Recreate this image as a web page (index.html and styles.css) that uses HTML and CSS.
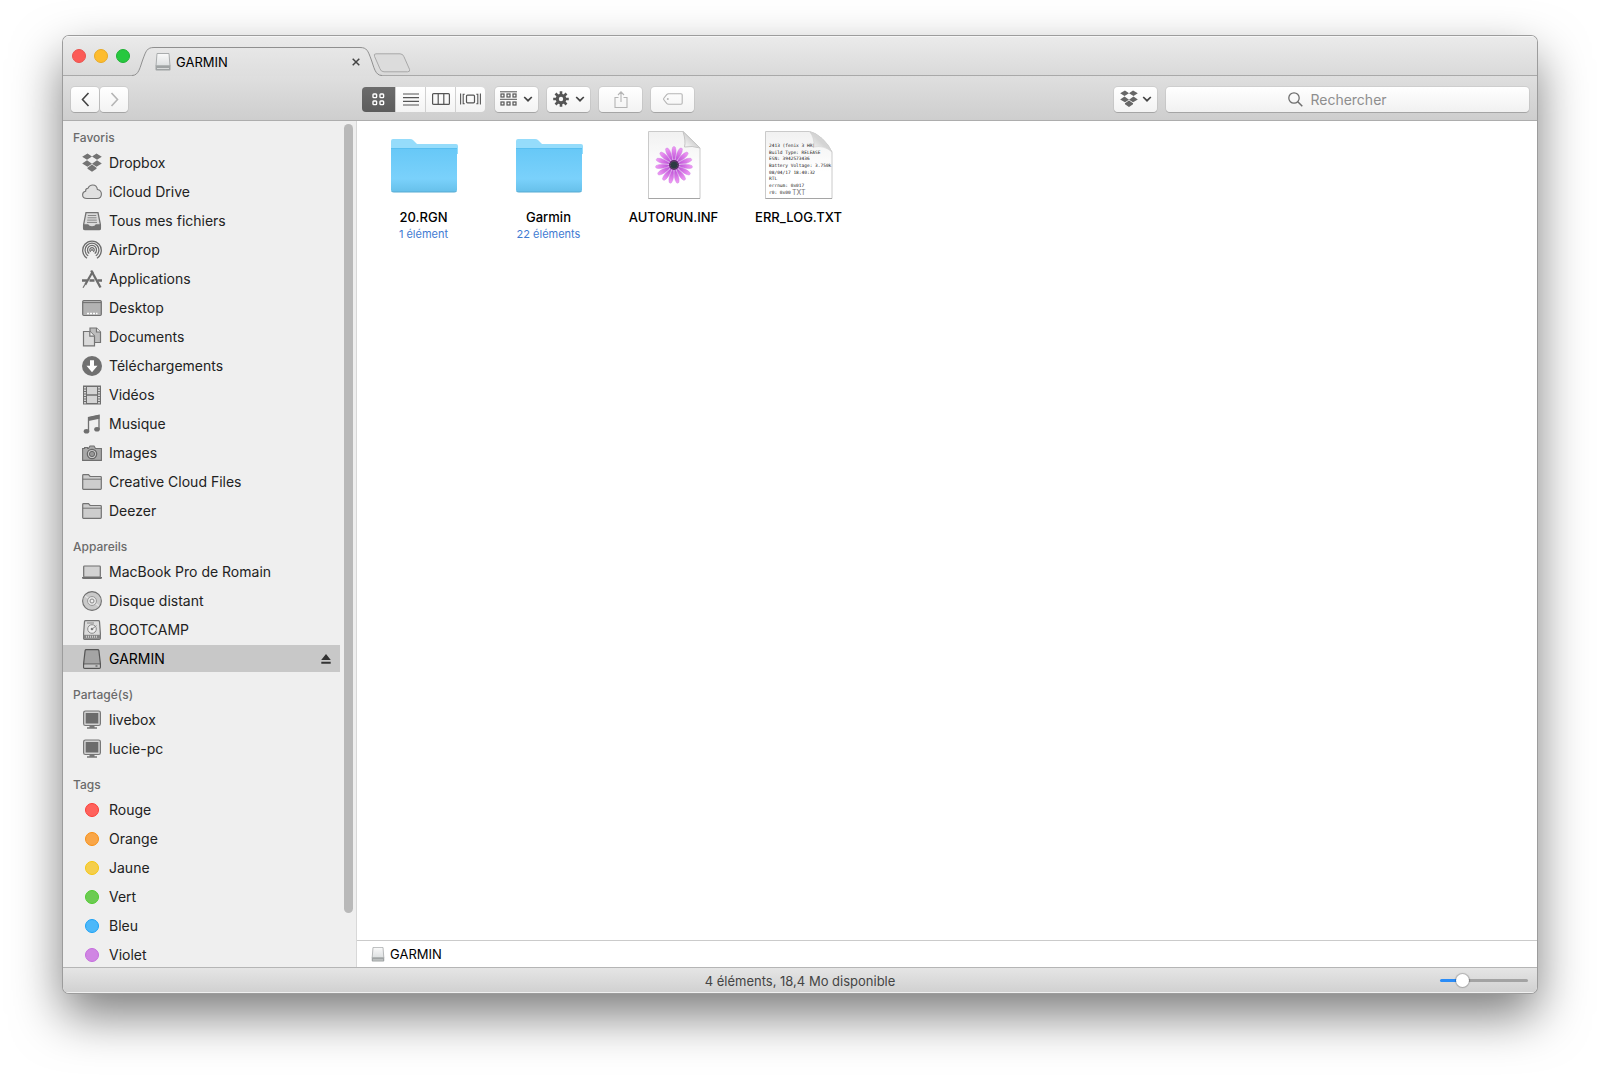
FILE: index.html
```html
<!DOCTYPE html>
<html lang="fr">
<head>
<meta charset="utf-8">
<title>GARMIN</title>
<link rel="stylesheet" href="styles.css">
</head>
<body>
<svg class="defs" aria-hidden="true">
  <defs>
    <linearGradient id="g-disk" x1="0" y1="0" x2="0" y2="1"><stop offset="0" stop-color="#fafafa"/><stop offset="1" stop-color="#dcdfe0"/></linearGradient>
    <linearGradient id="g-folder" x1="0" y1="0" x2="0" y2="1"><stop offset="0" stop-color="#67c8f7"/><stop offset=".7" stop-color="#7ad1fb"/><stop offset="1" stop-color="#66c0ea"/></linearGradient>
    <linearGradient id="g-page" x1="0" y1="0" x2="0" y2="1"><stop offset="0" stop-color="#f1f1f1"/><stop offset=".6" stop-color="#fff"/></linearGradient>
    <linearGradient id="g-fold" x1="0" y1="1" x2="1" y2="0"><stop offset="0" stop-color="#fff"/><stop offset=".5" stop-color="#d4d4d4"/></linearGradient>
    <linearGradient id="g-petal" x1="0" y1="0" x2="0" y2="1"><stop offset="0" stop-color="#f29bf6"/><stop offset="1" stop-color="#b545d2"/></linearGradient>
    <linearGradient id="g-tab" x1="0" y1="0" x2="0" y2="1"><stop offset="0" stop-color="#e7e7e7"/><stop offset="1" stop-color="#dedede"/></linearGradient>
  </defs>
  <symbol id="dropbox" viewBox="0 0 20 20"><path d="M5.500.5 10 3.500 5 6.800.2 3.700zM14.500.5 19.800 3.700 15 6.800 10 3.500zM.2 10.500 5 7.300 10 10.700 5.500 13.700zM15 7.300 19.800 10.500 14.500 13.700 10 10.700zM5.500 14.700 10 11.600 14.500 14.700V15.800L10 18.800 5.500 15.800z"/></symbol>
  <symbol id="disk" viewBox="0 0 16 18"><path d="M2 .5h12l1 12.500H1z" fill="url(#g-disk)" stroke="#a9acad"/><path d="M.5 12.500h15v4q0 1-1 1h-13q-1 0-1-1z" fill="#9fa3a4"/><path d="M2 15.500h12" stroke="#d8dada"/></symbol>
  <symbol id="folder-line" viewBox="0 0 20 20"><path d="M.7 16.500v-13q0-.8.8-.8h5l1.600 1.800h10.400q.8 0 .8.800v11.200q0 .8-.8.800h-17q-.8 0-.8-.8z" fill="#cdcdcd" stroke="#737373" stroke-width="1.200"/><path d="M.7 7.200h18.600" stroke="#737373"/></symbol>
  <symbol id="screen" viewBox="0 0 20 20"><rect x="1.600" y="1" width="16.800" height="14.500" rx="1.800" fill="#d2d2d2" stroke="#777" stroke-width="1.200"/><rect x="3.700" y="3" width="12.600" height="10.500" fill="#6c6c6c"/><path d="M7.500 15.500h5v1.800h2.500v1.400H5v-1.400h2.500z" fill="#777"/></symbol>
  <symbol id="chev-down" viewBox="0 0 10 6"><path d="M1.200 1 5 4.700 8.800 1" fill="none" stroke="#444" stroke-width="1.700"/></symbol>
  <symbol id="folder" viewBox="0 0 68 68"><path d="M1 18V10q0-2 2-2h17q2 0 3 1l4 4h39q2 0 2 2v8H1z" fill="#95dcfb"/><path d="M1 17h66v42q0 2-2 2H3q-2 0-2-2z" fill="url(#g-folder)"/><path d="M1 17.500h66" stroke="#58bff0"/><path d="M1.500 60q.5 1 2 1h61q1.500 0 2-1" fill="none" stroke="#58abd2"/></symbol>
</svg>

<main class="window">
  <header class="tabbar">
    <div class="lights">
      <button class="light close" aria-label="Fermer"></button>
      <button class="light mini" aria-label="Réduire"></button>
      <button class="light zoom" aria-label="Agrandir"></button>
    </div>
    <div class="tab">
      <svg class="tab-edge" viewBox="0 0 22 29"><path d="M0 28.500C7 28.500 8 20 11 12S15 .5 22 .5V29H0z" fill="url(#g-tab)"/><path d="M0 28.500C7 28.500 8 20 11 12S15 .5 22 .5" fill="none" stroke="#8f8f8f"/></svg>
      <div class="tab-body">
        <svg class="tab-disk"><use href="#disk"/></svg>
        <span class="tab-title">GARMIN</span>
        <button class="tab-close" aria-label="Fermer l’onglet"><svg viewBox="0 0 8 8"><path d="M.7.7l6.600 6.600M7.300.7.7 7.300" stroke="#444" stroke-width="1.500"/></svg></button>
      </div>
      <svg class="tab-edge" viewBox="0 0 22 29"><path d="M22 28.500C15 28.500 14 20 11 12S7 .5 0 .5V29H22z" fill="url(#g-tab)"/><path d="M22 28.500C15 28.500 14 20 11 12S7 .5 0 .5" fill="none" stroke="#8f8f8f"/></svg>
    </div>
    <button class="new-tab" aria-label="Nouvel onglet"><svg viewBox="0 0 38 20"><path d="M3 .8h24q3 0 4 3l5.500 12.500q1 2.500-2 2.500H11q-3 0-4-3L1.500 3.300Q.5.8 3 .8z" fill="#dcdcdc" stroke="#a8a8a8"/></svg></button>
  </header>

  <div class="toolbar">
    <div class="nav">
      <button class="btn" aria-label="Précédent"><svg width="9" height="15" viewBox="0 0 9 15"><path d="M7.500 1 1.500 7.500l6 6.500" fill="none" stroke="#444" stroke-width="1.600"/></svg></button>
      <button class="btn" aria-label="Suivant"><svg width="9" height="15" viewBox="0 0 9 15"><path d="M1.500 1l6 6.500-6 6.500" fill="none" stroke="#b5b5b5" stroke-width="1.600"/></svg></button>
    </div>
    <div class="views">
      <button class="seg on" aria-label="Icônes"><svg width="13" height="13" viewBox="0 0 13 13"><g fill="none" stroke="#fff" stroke-width="1.400"><rect x="1" y="1" width="3.600" height="3.600" rx=".8"/><rect x="8" y="1" width="3.600" height="3.600" rx=".8"/><rect x="1" y="8" width="3.600" height="3.600" rx=".8"/><rect x="8" y="8" width="3.600" height="3.600" rx=".8"/></g></svg></button>
      <button class="seg" aria-label="Liste"><svg width="16" height="13" viewBox="0 0 16 13"><path d="M0 1h16M0 4.700h16M0 8.400h16M0 12h16" stroke="#555" stroke-width="1.200"/></svg></button>
      <button class="seg" aria-label="Colonnes"><svg width="18" height="12" viewBox="0 0 18 12"><path d="M.6 1.600q0-1 1-1h14.800q1 0 1 1v8.800q0 1-1 1H1.600q-1 0-1-1zM6.200.6v10.800M11.800.6v10.800" fill="none" stroke="#555" stroke-width="1.200"/></svg></button>
      <button class="seg" aria-label="Cover Flow"><svg width="21" height="12" viewBox="0 0 21 12"><path d="M.6.500v11M3.200.8v10.400M17.800.8v10.400M20.400.5v11M3.200 1.200h1.500M3.200 10.800h1.500M17.800 1.200h-1.500M17.800 10.800h-1.500" stroke="#555" stroke-width="1.100"/><rect x="6.500" y="2.200" width="8" height="7.600" rx="1" fill="none" stroke="#555" stroke-width="1.200"/></svg></button>
    </div>
    <div class="actions">
      <button class="btn" aria-label="Organiser"><svg width="17" height="16" viewBox="0 0 17 16"><path d="M0 .8h17M0 8.300h17" stroke="#555"/><g fill="none" stroke="#555" stroke-width="1.200"><rect x="1" y="3" width="3" height="3"/><rect x="7" y="3" width="3" height="3"/><rect x="13" y="3" width="3" height="3"/><rect x="1" y="11" width="3" height="3"/><rect x="7" y="11" width="3" height="3"/><rect x="13" y="11" width="3" height="3"/></g></svg><svg class="chev"><use href="#chev-down"/></svg></button>
      <button class="btn" aria-label="Actions"><svg width="16" height="16" viewBox="-8 -8 16 16"><g stroke="#555" stroke-width="2.600"><path d="M0-7.800V7.800M-7.800 0H7.800M-5.500-5.500 5.500 5.500M5.500-5.500-5.500 5.500"/></g><circle r="3.800" fill="none" stroke="#555" stroke-width="3"/><circle r="2.200" fill="#f7f7f7"/></svg><svg class="chev"><use href="#chev-down"/></svg></button>
      <button class="btn" aria-label="Partager"><svg width="14" height="17" viewBox="0 0 14 17"><path d="M4.500 6.500H1v10h12v-10H9.500M7 11V1M4 4l3-3.200L10 4" fill="none" stroke="#b4b4b4" stroke-width="1.100"/></svg></button>
      <button class="btn" aria-label="Tags"><svg width="20" height="12" viewBox="0 0 20 12"><path d="M5.500.7H18q1.200 0 1.200 1.200v8.200q0 1.200-1.200 1.200H5.500q-1 0-1.800-.9L1 7q-.8-1 0-2l2.700-3.400Q4.500.7 5.500.7z" fill="none" stroke="#b4b4b4" stroke-width="1.100"/><circle cx="4.800" cy="6" r="1" fill="#b4b4b4"/></svg></button>
    </div>
    <button class="btn dropbox-btn" aria-label="Dropbox"><svg width="18" height="18" fill="#666"><use href="#dropbox"/></svg><svg class="chev"><use href="#chev-down"/></svg></button>
    <label class="search">
      <svg viewBox="0 0 15 15"><circle cx="6" cy="6" r="5.200" fill="none" stroke="#6e6e6e" stroke-width="1.300"/><path d="M9.800 9.800l4.500 4.500" stroke="#6e6e6e" stroke-width="1.500"/></svg>
      <input type="search" placeholder="Rechercher" aria-label="Rechercher">
    </label>
  </div>

  <div class="panes">
    <nav class="sidebar">
      <section class="group">
        <h2>Favoris</h2>
        <a href="#"><svg fill="#737373"><use href="#dropbox"/></svg>Dropbox</a>
        <a href="#"><svg viewBox="0 0 20 20"><path d="M5 16.500Q.6 16.500.6 12.700.6 9.800 3.600 9.200 3.400 6.500 6 6.300 7.300 3 10.800 3q4 0 4.600 4.500Q19.400 8.200 19.400 12q0 4.500-4.400 4.500z" fill="#e0e0e0" stroke="#737373" stroke-width="1.100"/></svg>iCloud Drive</a>
        <a href="#"><svg viewBox="0 0 20 20"><path d="M4 1.600h12l2.400 12v3.800q0 1.200-1.200 1.200H2.800q-1.200 0-1.200-1.200v-3.800z" fill="#dadada" stroke="#737373" stroke-width="1.300"/><path d="M5.800 4.500h8.400M5.500 6.800h9M5.200 9.100h9.600M5 11.400h10" stroke="#858585"/><path d="M1.600 13.300h4.600q.8 2 3.800 2t3.800-2h4.600v4.100q0 1.200-1.200 1.200H2.800q-1.200 0-1.200-1.200z" fill="#737373"/></svg>Tous mes fichiers</a>
        <a href="#"><svg viewBox="0 0 20 20"><g fill="none" stroke="#6c6c6c" stroke-width="1.300"><path d="M5 18.200a9.300 9.300 0 1 1 10 0"/><path d="M6.200 15.800a6.900 6.900 0 1 1 7.600 0"/><path d="M7.300 13.500a4.500 4.500 0 1 1 5.400 0"/><path d="M8.800 11.600a2.200 2.200 0 1 1 2.400 0"/></g><circle cx="10" cy="10" r="1" fill="#6c6c6c"/></svg>AirDrop</a>
        <a href="#"><svg viewBox="0 0 20 20"><g stroke="#6c6c6c" fill="none"><path d="M10.800 2.500 3.200 15.800" stroke-width="2.200"/><path d="M9.200 1.500 18.500 18.500" stroke-width="2.300"/><path d="M0 11.500h5M7.500 11.500h5M15.500 11.500H20" stroke-width="2.600"/><path d="M3 15.500 1 18.800" stroke-width="1.200"/></g></svg>Applications</a>
        <a href="#"><svg viewBox="0 0 20 20"><rect x=".7" y="2.500" width="18.600" height="15" rx="1.200" fill="#b2b2b2" stroke="#6f6f6f" stroke-width="1.200"/><path d="M1 4.600h18" stroke="#6f6f6f"/><path d="M5 15.500h2M8 15.500h2M11 15.500h2M14 15.500h1.500" stroke="#fff" stroke-width="1.600"/></svg>Desktop</a>
        <a href="#"><svg viewBox="0 0 20 20"><g stroke="#737373" stroke-width="1.200"><path d="M8 1h6.500L18.500 5v10.500H8z" fill="#bdbdbd"/><path d="M14.500 1v4h4" fill="#eee"/><path d="M1.500 4.500h6.500l4.500 4.500v9.800h-11z" fill="#dadada"/><path d="M7.800 4.500v4.700h4.700" fill="#f0f0f0"/></g></svg>Documents</a>
        <a href="#"><svg viewBox="0 0 20 20"><circle cx="10" cy="10" r="10" fill="#707070"/><path d="M8 4.200h4v5.500h3.500L10 16.200 4.500 9.700H8z" fill="#fff"/></svg>Téléchargements</a>
        <a href="#"><svg viewBox="0 0 20 20"><rect x="1" y=".5" width="18" height="19" fill="#6f6f6f"/><path d="M5 2h10v7.300H5zM5 10.700h10V18H5z" fill="#d4d4d4"/><path d="M3 2v17M17 2v17" stroke="#dcdcdc" stroke-width="1.800" stroke-dasharray="1.500 1"/></svg>Vidéos</a>
        <a href="#"><svg viewBox="0 0 20 20"><path d="M6.500 17V3.500L17 1.200V15" fill="none" stroke="#6f6f6f" stroke-width="1.300"/><path d="M6.500 3.200 17.500.8v4L6.500 7z" fill="#6f6f6f"/><ellipse cx="4.500" cy="17.300" rx="2.800" ry="2.300" fill="#6f6f6f"/><ellipse cx="15" cy="15.300" rx="2.800" ry="2.300" fill="#6f6f6f"/></svg>Musique</a>
        <a href="#"><svg viewBox="0 0 20 20"><path d="M.6 5.500h2v-1h3v1h.9L8 3h4l1.500 2.500h5.900v11.900H.6z" fill="#a8a8a8" stroke="#6f6f6f" stroke-width="1.100"/><circle cx="10" cy="11" r="4.700" fill="#c8c8c8" stroke="#666" stroke-width="1.200"/><circle cx="10" cy="11" r="2.600" fill="#989898" stroke="#666"/></svg>Images</a>
        <a href="#"><svg><use href="#folder-line"/></svg>Creative Cloud Files</a>
        <a href="#"><svg><use href="#folder-line"/></svg>Deezer</a>
      </section>
      <section class="group">
        <h2>Appareils</h2>
        <a href="#"><svg viewBox="0 0 20 20"><rect x="1.700" y="4" width="16.600" height="11" rx=".8" fill="#d2d2d2" stroke="#6f6f6f" stroke-width="1.200"/><path d="M0 15h20v1.200q-.5.800-1.500.8h-17Q.5 17 0 16.200z" fill="#6f6f6f"/></svg>MacBook Pro de Romain</a>
        <a href="#"><svg viewBox="0 0 20 20"><circle cx="10" cy="10" r="9.400" fill="#c9c9c9" stroke="#6f6f6f" stroke-width="1.100"/><path d="M10 10 3 5M10 10l7 5" stroke="#e4e4e4" stroke-width="1.500"/><circle cx="10" cy="10" r="4.500" fill="#e4e4e4" stroke="#999"/><circle cx="10" cy="10" r="2" fill="#eee" stroke="#888"/></svg>Disque distant</a>
        <a href="#"><svg viewBox="0 0 20 20"><path d="M3.500.7h13q.8 0 1 1l.9 12v4.600q0 1-1 1H2.600q-1 0-1-1v-4.600l.9-12q.2-1 1-1z" fill="#dcdcdc" stroke="#737373" stroke-width="1.200"/><path d="M1.600 14.800h16.800v4H1.600z" fill="#858585"/><path d="M4 16.800h12" stroke="#ccc" stroke-width="2" stroke-dasharray="1 1"/><circle cx="10" cy="9" r="4.300" fill="#eee" stroke="#8a8a8a"/><circle cx="10" cy="9" r="1.300" fill="#777"/><path d="M10 9l4.500-3.300M5 3h7" stroke="#888"/></svg>BOOTCAMP</a>
        <a href="#" class="current"><svg viewBox="0 0 20 20"><path d="M4.300.7h11.400q1 0 1.200 1l1.500 13v3.500q0 1.100-1.100 1.100H2.700q-1.100 0-1.100-1.100v-3.500l1.500-13q.2-1 1.200-1z" fill="#a4a4a4" stroke="#555" stroke-width="1.200"/><path d="M1.800 15h16.400" stroke="#555"/><path d="M2.300 15.600h15.400v3H2.300z" fill="#c4c4c4"/><path d="M13.500 17h2" stroke="#444"/></svg>GARMIN<svg class="eject" viewBox="0 0 10 10"><path d="M5 0l4.800 6H.2zM.3 7.800h9.400v2H.3z" fill="#333"/></svg></a>
      </section>
      <section class="group">
        <h2>Partagé(s)</h2>
        <a href="#"><svg><use href="#screen"/></svg>livebox</a>
        <a href="#"><svg><use href="#screen"/></svg>lucie-pc</a>
      </section>
      <section class="group">
        <h2>Tags</h2>
        <a href="#"><i class="dot red"></i>Rouge</a>
        <a href="#"><i class="dot orange"></i>Orange</a>
        <a href="#"><i class="dot yellow"></i>Jaune</a>
        <a href="#"><i class="dot green"></i>Vert</a>
        <a href="#"><i class="dot blue"></i>Bleu</a>
        <a href="#"><i class="dot purple"></i>Violet</a>
      </section>
      <div class="thumb"></div>
    </nav>

    <div class="content">
      <div class="files">
        <figure class="file">
          <svg><use href="#folder"/></svg>
          <figcaption>20.RGN<small>1 élément</small></figcaption>
        </figure>
        <figure class="file">
          <svg><use href="#folder"/></svg>
          <figcaption>Garmin<small>22 éléments</small></figcaption>
        </figure>
        <figure class="file">
          <svg viewBox="0 0 68 68"><path d="M8.500.5H43L60 17v50.500H8.500z" fill="url(#g-page)" stroke="#cacaca"/><path d="M8.500 67.500H60" stroke="#a5a5a5"/><path d="M43 .5Q46 10 44.500 16 52 14.500 60 17z" fill="url(#g-fold)" stroke="#c4c4c4"/>
            <g transform="translate(34 34)" fill="url(#g-petal)" stroke="#c77fdd" stroke-width=".4">
              <g id="petals"><path id="petal" d="M0-3Q-3.600-13-1.200-18q1.200-1.200 2.400 0Q3.600-13 0-3z"/><use href="#petal" transform="rotate(24)"/><use href="#petal" transform="rotate(48)"/><use href="#petal" transform="rotate(72)"/><use href="#petal" transform="rotate(96)"/></g>
              <use href="#petals" transform="rotate(120)"/><use href="#petals" transform="rotate(240)"/>
              <circle r="5" fill="#5b2a6a" stroke="none"/><circle r="3.600" fill="#2c3b42" stroke="#7b8a6a" stroke-dasharray="1 1"/>
            </g></svg>
          <figcaption>AUTORUN.INF</figcaption>
        </figure>
        <figure class="file">
          <svg viewBox="0 0 136 136"><path d="M1 1h88q12 2 25 14t20 27v93H1z" fill="url(#g-page)" stroke="#cacaca" stroke-width="2"/><path d="M1 135h133" stroke="#a5a5a5" stroke-width="2"/>
            <g class="log"><text x="8" y="31">2413 (fenix 3 HR)</text><text x="8" y="45">Build Type: RELEASE</text><text x="8" y="58">ESN: 3942573436</text><text x="8" y="71">Battery Voltage: 3.750k</text><text x="8" y="85">08/04/17 18:40:32</text><text x="8" y="98">RTL</text><text x="8" y="111">errnum: 0x017</text><text x="8" y="126">r0: 0x00</text></g>
            <text class="kind" x="54" y="128">TXT</text>
            <path d="M89 1q10 12 9 31 20-4 36 10-7-16-20-27T89 1z" fill="url(#g-fold)" stroke="#ccc"/></svg>
          <figcaption>ERR_LOG.TXT</figcaption>
        </figure>
      </div>
      <div class="pathbar"><svg><use href="#disk"/></svg>GARMIN</div>
    </div>
  </div>

  <footer class="status">
    <span>4 éléments, 18,4 Mo disponible</span>
    <input type="range" min="0" max="100" value="21" aria-label="Taille des icônes">
  </footer>
</main>
</body>
</html>
```
FILE: styles.css
```css
* { box-sizing: border-box; }
body {
  margin: 0;
  padding: 36px 63px 90px;
  height: 100vh;
  background: #fff;
  color: #222;
  font-family: Inter, "Liberation Sans", sans-serif;
  font-size: 14px;
}
svg { display: block; flex: none; }
button { padding: 0; border: 0; background: none; font: inherit; }
.defs { position: absolute; width: 0; height: 0; }

.window {
  display: flex;
  flex-direction: column;
  height: 100%;
  border-radius: 6px;
  overflow: hidden;
  background: #fff;
  box-shadow: 0 0 0 1px #9c9c9c, 0 22px 50px rgba(0, 0, 0, .52);
}

/* tab bar */
.tabbar {
  display: flex;
  flex: none;
  height: 40px;
  padding-left: 9px;
  background: linear-gradient(#ebebeb, #d9d9d9);
  box-shadow: inset 0 1px #f6f6f6, inset 0 -1px #a9a9a9;
}
.lights { display: flex; gap: 8px; padding-top: 13px; width: 60px; }
.light { width: 14px; height: 14px; border-radius: 50%; border: 1px solid; }
.close { background: #fc5b57; border-color: #e9544f; }
.mini { background: #fdbc2e; border-color: #e8aa25; }
.zoom { background: #27c83f; border-color: #1fb134; }
.tab { display: flex; align-self: flex-end; }
.tab-edge { width: 22px; height: 29px; }
.tab-body {
  display: flex;
  align-items: center;
  width: 206px;
  height: 29px;
  border-top: 1px solid #8f8f8f;
  background: linear-gradient(#e7e7e7, #dedede);
}
.tab-disk { width: 16px; height: 18px; margin: 0 5px 0 1px; }
.tab-title { flex: 1; color: #000; font-size: 13px; }
.tab-close { width: 8px; height: 8px; }
.new-tab { width: 38px; height: 20px; margin: 17px 0 0 -9px; }

/* toolbar */
.toolbar {
  display: flex;
  align-items: center;
  flex: none;
  height: 45px;
  padding: 2px 8px 0;
  background: linear-gradient(#dfdfdf, #cecece);
  border-bottom: 1px solid #adadad;
}
.btn, .seg {
  display: flex;
  align-items: center;
  justify-content: center;
  height: 25px;
  background: linear-gradient(#fff, #f3f3f3);
}
.btn { width: 43px; gap: 6px; border-radius: 4px; box-shadow: 0 0 0 1px rgba(0, 0, 0, .06), 0 1px #b0b0b0; }
.nav { display: flex; gap: 1px; width: 291px; }
.nav .btn { width: 28px; }
.views { display: flex; gap: 1px; margin-right: 10px; border-radius: 4px; overflow: hidden; background: #d0d0d0; }
.seg { width: 29px; }
.seg.on { width: 33px; background: linear-gradient(#6c6c6c, #5c5c5c); }
.actions { display: flex; flex: 1; gap: 9px; }
.chev { width: 10px; height: 6px; }
.dropbox-btn { gap: 4px; margin: 0 9px; }
.search { position: relative; flex: 0 1 363px; }
.search svg { position: absolute; top: 5px; left: calc(50% - 60px); width: 15px; height: 15px; }
.search input {
  display: block;
  width: 100%;
  height: 25px;
  padding: 0 0 0 16px;
  border: 0;
  border-radius: 4px;
  background: linear-gradient(#fff, #f1f1f1);
  box-shadow: 0 0 0 1px rgba(0, 0, 0, .06), 0 1px #b0b0b0;
  font: inherit;
  text-align: center;
  appearance: none;
}
.search input::placeholder { color: #8e8e8e; opacity: 1; }

/* sidebar */
.panes { display: flex; flex: 1; min-height: 0; }
.sidebar {
  position: relative;
  display: flex;
  flex-direction: column;
  flex: none;
  gap: 10px;
  width: 294px;
  padding: 4px 16px 0 0;
  overflow: hidden;
  background: #efefef;
  border-right: 1px solid #d8d8d8;
}
.group { display: flex; flex-direction: column; gap: 2px; }
.group h2 { margin: 0 0 -2px; padding: 1px 0 0 10px; color: #6a6a6a; font-size: 12px; font-weight: 500; line-height: 23px; }
.group a {
  display: flex;
  align-items: center;
  gap: 7px;
  height: 27px;
  padding: 0 9px 0 19px;
  color: #222;
  text-decoration: none;
}
.group svg { width: 20px; height: 20px; }
.group .current { background: #c8c8c8; color: #000; }
.group .eject { width: 10px; height: 10px; margin-left: auto; }
.dot { width: 14px; height: 14px; margin: 0 3px; border: 1px solid; border-radius: 50%; }
.red { background: #ff625c; border-color: #fb3c36; }
.orange { background: #f9a648; border-color: #f88f12; }
.yellow { background: #f5ce4c; border-color: #f5c60c; }
.green { background: #6ccb52; border-color: #4ecb2e; }
.blue { background: #4db8f9; border-color: #1ba1f5; }
.purple { background: #d085e3; border-color: #c56ddd; }
.thumb { position: absolute; top: 3px; right: 3px; width: 9px; height: 789px; border-radius: 5px; background: #b9b9b9; }

/* files */
.content { display: flex; flex: 1; flex-direction: column; min-width: 0; }
.files { display: flex; flex: 1; flex-wrap: wrap; align-content: flex-start; padding: 10px 4px; }
.file { display: flex; flex-direction: column; align-items: center; gap: 8px; width: 125px; margin: 0; }
.file > svg { width: 68px; height: 68px; }
.file figcaption { color: #000; font-size: 13px; font-weight: 500; line-height: 21px; text-align: center; }
.file small { display: block; color: #3f7bd2; font-size: 11px; font-weight: 400; line-height: 13px; }
.log { fill: #222; font-family: "DejaVu Sans Mono", monospace; font-size: 9px; }
.kind { fill: #777; font-size: 14px; }
.pathbar {
  display: flex;
  align-items: center;
  gap: 5px;
  height: 27px;
  padding-left: 14px;
  border-top: 1px solid #cbcbcb;
  color: #000;
  font-size: 13px;
}
.pathbar svg { width: 14px; height: 15px; }

/* status bar */
.status {
  display: grid;
  grid-template-columns: 1fr auto 1fr;
  align-items: center;
  flex: none;
  height: 26px;
  padding: 0 9px;
  border-top: 1px solid #b5b5b5;
  background: linear-gradient(#e5e5e5, #d0d0d0);
  box-shadow: inset 0 -1px #f0f0f0;
  color: #444;
  font-size: 13px;
}
.status span { grid-column: 2; }
.status input { justify-self: end; width: 88px; height: 14px; margin: 0; appearance: none; background: none; }
.status input::-webkit-slider-runnable-track { height: 3px; border-radius: 2px; background: linear-gradient(90deg, #2a8cf7 25%, #a3a3a3 25%); }
.status input::-webkit-slider-thumb { width: 13px; height: 13px; margin-top: -5px; appearance: none; border-radius: 50%; background: #fff; box-shadow: 0 0 1px 1px rgba(0, 0, 0, .22); }
```
